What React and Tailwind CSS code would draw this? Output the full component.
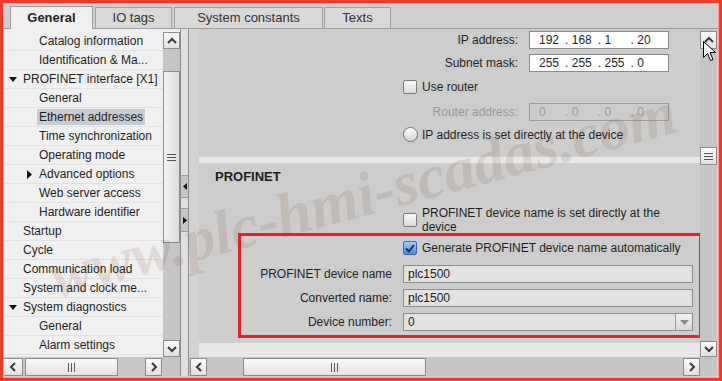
import React from 'react'

const tree = [
  { t: 'Catalog information', l: 1 },
  { t: 'Identification & Ma...', l: 1 },
  { t: 'PROFINET interface [X1]', l: 0, caret: 'down' },
  { t: 'General', l: 1 },
  { t: 'Ethernet addresses', l: 1, sel: true },
  { t: 'Time synchronization', l: 1 },
  { t: 'Operating mode', l: 1 },
  { t: 'Advanced options', l: 1, caret: 'right' },
  { t: 'Web server access', l: 1 },
  { t: 'Hardware identifier', l: 1 },
  { t: 'Startup', l: 0 },
  { t: 'Cycle', l: 0 },
  { t: 'Communication load', l: 0 },
  { t: 'System and clock me...', l: 0 },
  { t: 'System diagnostics', l: 0, caret: 'down' },
  { t: 'General', l: 1 },
  { t: 'Alarm settings', l: 1 },
]

const Chev = ({ dir = 'up' }) => {
  const v = dir === 'up' || dir === 'down'
  const pts = { up: '1,6 5,2 9,6', down: '1,2 5,6 9,2', left: '6,1 2,5 6,9', right: '2,1 6,5 2,9' }[dir]
  return (
    <svg width={v ? 10 : 8} height={v ? 8 : 10} viewBox={v ? '0 0 10 8' : '0 0 8 10'}>
      <polyline points={pts} fill="none" stroke="#3a3a3a" strokeWidth="2" />
    </svg>
  )
}

const Btn = ({ dir, className = '' }) => (
  <div className={`flex shrink-0 items-center justify-center border border-[#8a8a8a] bg-linear-to-b from-[#fbfbfb] to-[#e1e1e1] ${className}`}>
    <Chev dir={dir} />
  </div>
)

const GripH = () => (
  <div className="flex flex-col gap-[2px]">
    <div className="h-px w-[9px] bg-[#555]" />
    <div className="h-px w-[9px] bg-[#555]" />
    <div className="h-px w-[9px] bg-[#555]" />
  </div>
)

const GripV = () => (
  <div className="flex gap-[2px]">
    <div className="h-[9px] w-px bg-[#555]" />
    <div className="h-[9px] w-px bg-[#555]" />
    <div className="h-[9px] w-px bg-[#555]" />
  </div>
)

const Check = ({ checked }) =>
  checked ? (
    <span className="flex h-[14px] w-[14px] shrink-0 items-center justify-center rounded-[2px] border border-[#3a68a8] bg-linear-to-b from-[#a9cdf5] to-[#4a88d6]">
      <svg width="10" height="9" viewBox="0 0 10 9">
        <polyline points="1,4.5 4,7.5 9,1" fill="none" stroke="#14306a" strokeWidth="2" />
      </svg>
    </span>
  ) : (
    <span className="h-[14px] w-[14px] shrink-0 rounded-[2px] border border-[#7c7c7c] bg-linear-to-b from-[#fbfbfb] to-[#d9d9d9]" />
  )

const IpBox = ({ parts, disabled }) => (
  <div
    className={`flex h-[18px] w-[140px] items-center border pl-[7px] text-[12px] ${
      disabled ? 'border-[#9a9a9a] text-[#9a9a9a]' : 'border-[#8a8a8a] bg-white text-[#1e1e1e]'
    }`}
  >
    {parts.map((p, i) => (
      <div key={i} className="flex w-[36px]">
        <span className="w-[28px] pl-[2px]">{p}</span>
        {i < 3 && <span>.</span>}
      </div>
    ))}
  </div>
)

const FieldRow = ({ label, value, select, className = '' }) => (
  <div className={`flex h-[18px] items-center ${className}`}>
    <span className="w-[151px] text-right">{label}</span>
    <div className="ml-[11px] flex h-[18px] w-[290px] items-center border border-[#8e8e8e] bg-[#e2e2e2]">
      <span className="pl-[4px]">{value}</span>
      {select && (
        <div className="ml-auto flex h-full w-[17px] items-center justify-center border-l border-[#9a9a9a] bg-linear-to-b from-[#f4f4f4] to-[#d8d8d8]">
          <svg width="9" height="5" viewBox="0 0 9 5">
            <polygon points="0,0 9,0 4.5,5" fill="#8a8a8a" />
          </svg>
        </div>
      )}
    </div>
  </div>
)

export default function App() {
  return (
    <div className="relative flex h-[381px] w-[722px] flex-col overflow-hidden border-[3px] border-[#ee3a2f] bg-[#cfcfcf] font-[Liberation_Sans,Arial,sans-serif] text-[12px] text-[#1e1e1e]">
      {/* tabs */}
      <div className="flex h-[26px] shrink-0 items-end gap-[2px] border-b border-[#9c9c9c] pl-[7px] text-[13px]">
        <div className="relative z-10 -mb-px flex h-[23px] w-[83px] items-center justify-center border border-b-0 border-[#9c9c9c] bg-[#f0f0f0] font-bold">
          General
        </div>
        <div className="flex h-[21px] w-[77px] items-center justify-center border border-b-0 border-[#a3a3a3] bg-[#d9d9d9] text-[#333]">
          IO tags
        </div>
        <div className="flex h-[21px] w-[149px] items-center justify-center border border-b-0 border-[#a3a3a3] bg-[#d9d9d9] text-[#333]">
          System constants
        </div>
        <div className="-ml-px flex h-[21px] w-[67px] items-center justify-center border border-b-0 border-[#a3a3a3] bg-[#d9d9d9] text-[#333]">
          Texts
        </div>
      </div>

      <div className="flex h-[347px]">
        {/* tree */}
        <div className="flex w-[160px] flex-col">
          <div className="h-[328px] bg-[#f0f0f0] pt-[3px]">
            {tree.map((r, i) => (
              <div key={i} className="relative flex h-[19px] items-center border-b border-[#e3e3e3]">
                {r.caret === 'down' && (
                  <svg className="absolute left-[6px] top-[7px]" width="8" height="5" viewBox="0 0 8 5">
                    <polygon points="0,0 8,0 4,5" fill="#111" />
                  </svg>
                )}
                {r.caret === 'right' && (
                  <svg className="absolute left-[24px] top-[5px]" width="5" height="9" viewBox="0 0 5 9">
                    <polygon points="0,0 5,4.5 0,9" fill="#111" />
                  </svg>
                )}
                <span
                  className={`whitespace-nowrap ${r.l ? 'ml-[34px]' : 'ml-[18px]'} px-[2px] leading-[16px] ${
                    r.sel ? 'bg-[#c6ccd6]' : ''
                  }`}
                >
                  {r.t}
                </span>
              </div>
            ))}
          </div>
          <div className="flex h-[19px] items-start bg-[#c8c8c8] pt-px">
            <Btn dir="left" className="h-[18px] w-[20px]" />
            <div className="ml-[2px] flex h-[18px] w-[93px] items-center justify-center border border-[#8a8a8a] bg-linear-to-b from-[#fbfbfb] to-[#e1e1e1]">
              <GripV />
            </div>
            <div className="flex-1" />
            <Btn dir="right" className="mr-px h-[18px] w-[17px]" />
          </div>
        </div>

        {/* tree v-scroll */}
        <div className="flex w-[17px] flex-col bg-[#c6c6c6]">
          <div className="h-[3px] bg-[#f0f0f0]" />
          <Btn dir="up" className="h-[17px] w-[17px]" />
          <div className="h-[22px]" />
          <div className="flex h-[172px] items-center justify-center border border-[#8a8a8a] bg-linear-to-r from-[#f6f6f6] to-[#dcdcdc]">
            <GripH />
          </div>
          <div className="flex-1" />
          <Btn dir="down" className="h-[17px] w-[17px]" />
          <div className="h-[19px]" />
        </div>

        {/* splitter */}
        <div className="flex w-[9px] flex-col border-x border-[#8e8e8e] bg-[#e0e0e0]">
          <div className="h-[146px]" />
          <div className="flex h-[23px] items-center justify-center border-y border-[#9a9a9a] bg-[#c6c6c6]">
            <svg width="4" height="7" viewBox="0 0 4 7">
              <polygon points="4,0 0,3.5 4,7" fill="#111" />
            </svg>
          </div>
          <div className="h-[10px]" />
          <div className="flex h-[24px] items-center justify-center border-y border-[#9a9a9a] bg-[#c6c6c6]">
            <svg width="4" height="7" viewBox="0 0 4 7">
              <polygon points="0,0 4,3.5 0,7" fill="#111" />
            </svg>
          </div>
        </div>

        {/* right panel */}
        <div className="flex w-[528px] flex-col">
          <div className="flex h-[328px]">
            <div className="w-[10px] bg-[#d3d3d3]" />
            <div className="flex w-[501px] flex-col">
              <div className="h-[128px] bg-[#cdcdcd] pt-[2px]">
                <div className="flex h-[18px] items-center">
                  <span className="w-[319px] text-right">IP address:</span>
                  <div className="ml-[11px]">
                    <IpBox parts={['192', '168', '1', '20']} />
                  </div>
                </div>
                <div className="mt-[5px] flex h-[18px] items-center">
                  <span className="w-[319px] text-right">Subnet mask:</span>
                  <div className="ml-[11px]">
                    <IpBox parts={['255', '255', '255', '0']} />
                  </div>
                </div>
                <div className="mt-[8px] flex h-[14px] items-center pl-[204px]">
                  <Check />
                  <span className="ml-[5px]">Use router</span>
                </div>
                <div className="mt-[9px] flex h-[18px] items-center">
                  <span className="w-[319px] text-right text-[#9a9a9a]">Router address:</span>
                  <div className="ml-[11px]">
                    <IpBox parts={['0', '0', '0', '0']} disabled />
                  </div>
                </div>
                <div className="mt-[6px] flex h-[15px] items-center pl-[204px]">
                  <span className="h-[15px] w-[15px] shrink-0 rounded-full border border-[#6f6f6f] bg-linear-to-b from-white to-[#d4d4d4]" />
                  <span className="ml-[4px]">IP address is set directly at the device</span>
                </div>
              </div>
              <div className="h-[6px] bg-[#e8e8e8]" />
              <div className="h-[180px] bg-[#cdcdcd] pt-[6px]">
                <div className="pl-[16px] text-[13px] font-bold leading-[15px]">PROFINET</div>
                <div className="mt-[22px] flex items-center pl-[204px]">
                  <Check />
                  <span className="ml-[5px] w-[245px] leading-[14px]">PROFINET device name is set directly at the device</span>
                </div>
                <div className="-mt-px ml-[39px] h-[105px] w-[464px] border-[3px] border-[#e5202b] pt-[5px]">
                  <div className="flex h-[14px] items-center pl-[162px]">
                    <Check checked />
                    <span className="ml-[5px] whitespace-nowrap">Generate PROFINET device name automatically</span>
                  </div>
                  <FieldRow className="mt-[10px]" label="PROFINET device name" value="plc1500" />
                  <FieldRow className="mt-[6px]" label="Converted name:" value="plc1500" />
                  <FieldRow className="mt-[6px]" label="Device number:" value="0" select />
                </div>
              </div>
              <div className="flex-1 bg-[#e8e8e8]" />
            </div>
            <div className="flex w-[17px] flex-col bg-[#c6c6c6]">
              <div className="h-[2px]" />
              <Btn dir="up" className="h-[18px] w-[17px]" />
              <div className="h-[98px]" />
              <div className="flex h-[18px] items-center justify-center border border-[#8a8a8a] bg-linear-to-b from-[#fbfbfb] to-[#e1e1e1]">
                <GripH />
              </div>
              <div className="flex-1" />
              <Btn dir="down" className="h-[16px] w-[17px]" />
            </div>
          </div>
          <div className="flex h-[19px] bg-[#c6c6c6]">
            <div className="flex w-[511px] items-start pt-px">
              <Btn dir="left" className="ml-px h-[18px] w-[17px]" />
              <div className="ml-[36px] flex h-[18px] w-[183px] items-center justify-center border border-[#8a8a8a] bg-linear-to-b from-[#fbfbfb] to-[#e1e1e1]">
                <GripV />
              </div>
              <div className="flex-1" />
              <Btn dir="right" className="h-[18px] w-[17px]" />
            </div>
          </div>
        </div>
      </div>

      {/* watermark */}
      <div className="pointer-events-none absolute left-[360px] top-[192px] -translate-x-1/2 -translate-y-1/2 -rotate-[15deg] whitespace-nowrap font-[Liberation_Serif,serif] text-[62px] font-bold italic text-[#7a4a2a] opacity-[0.13]">
        www.plc-hmi-scadas.com
      </div>

      {/* mouse cursor */}
      <svg className="pointer-events-none absolute left-[700px] top-[38px]" width="13" height="21" viewBox="0 0 13 21">
        <path d="M0.5 0.5 L0.5 16.5 L4.5 12.5 L7.5 19.5 L10 18.5 L7 11.5 L12.5 11.5 Z" fill="#fff" stroke="#000" strokeWidth="1" />
      </svg>

      <div className="pointer-events-none absolute inset-0 shadow-[inset_0_0_0_1px_#f5a39b]" />
    </div>
  )
}
